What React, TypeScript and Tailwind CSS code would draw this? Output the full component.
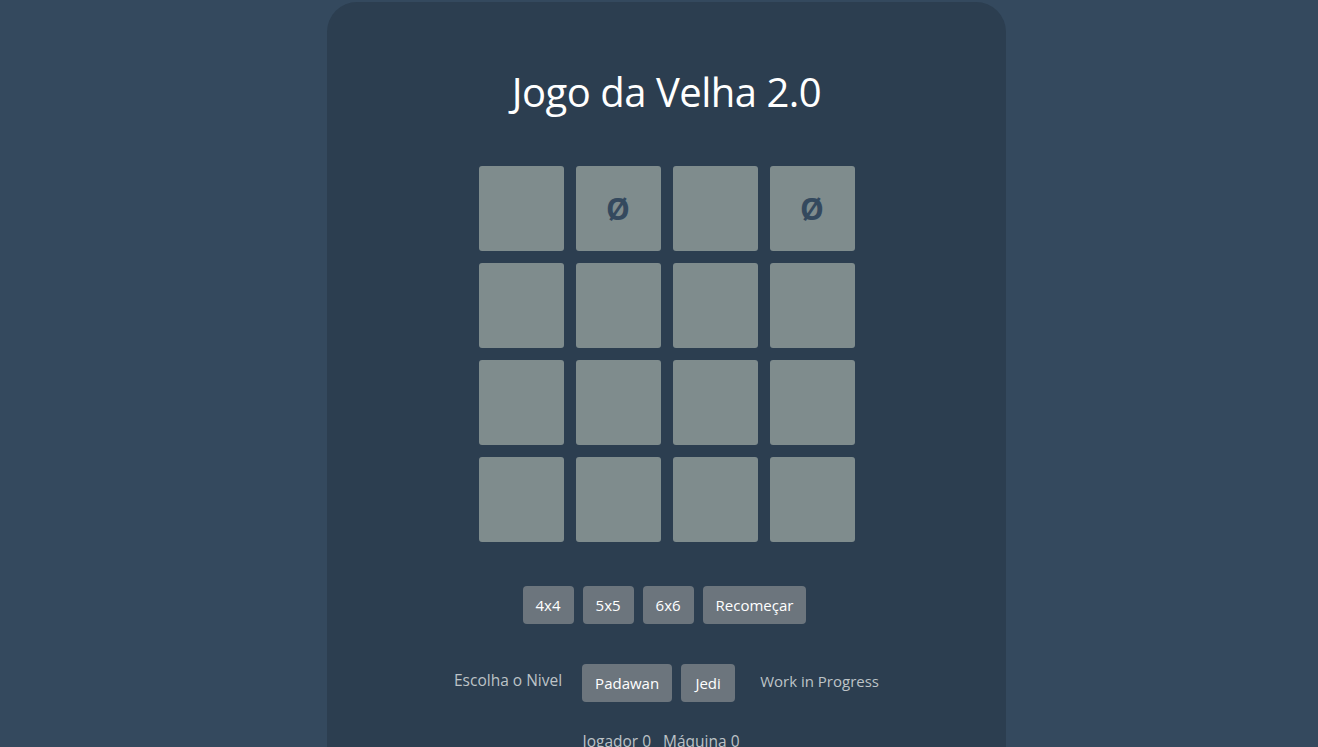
import React from 'react';

const board: string[] = ['', 'ø', '', 'ø', '', '', '', '', '', '', '', '', '', '', '', ''];

export default function App() {
  return (
    <div
      className="min-h-[747px] bg-[#34495e] flex justify-center pl-[15px] pt-[2px]"
      style={{ fontFamily: '"Open Sans", "Noto Sans", sans-serif' }}
    >
      <div className="w-[679px] bg-[#2c3e50] rounded-t-[30px] flex flex-col items-center pt-[66px] pb-6">
        <h1 className="text-[40px] leading-[48px] text-white font-normal tracking-[-0.5px]">Jogo da Velha 2.0</h1>

        {/* tabuleiro */}
        <div className="grid grid-cols-4 gap-[12px] mt-[50px]">
          {board.map((v, i) => (
            <div
              key={i}
              className="w-[85px] h-[85px] bg-[#7f8c8d] rounded-[3px] flex items-center justify-center text-[30px] font-bold text-[#34495e]"
            >
              {v === 'ø' ? 'Ø' : ''}
            </div>
          ))}
        </div>

        {/* tamanhos */}
        <div className="flex gap-[9px] mt-[44px] mr-[4px]">
          {['4x4', '5x5', '6x6', 'Recomeçar'].map((b) => (
            <button key={b} className="h-[38px] px-[13px] bg-[#6c757d] text-white text-[15px] rounded-[4px]">
              {b}
            </button>
          ))}
        </div>

        {/* nivel */}
        <div className="flex items-center mt-[40px] text-[15px] text-[#bdc3c7]">
          <span className="mr-5 -mt-[4px] text-[15.5px]">Escolha o Nivel</span>
          <button className="h-[38px] px-[13px] bg-[#6c757d] text-white rounded-[4px]">Padawan</button>
          <button className="h-[38px] w-[54px] bg-[#6c757d] text-white rounded-[4px] ml-[9px]">Jedi</button>
          <span className="ml-[25px] -mt-[4px]">Work in Progress</span>
        </div>

        {/* placar */}
        <div className="flex gap-[12px] mt-[28px] mr-[11px] text-[15.5px] text-[#bdc3c7]">
          <span>Jogador 0</span>
          <span>Máquina 0</span>
        </div>
      </div>
    </div>
  );
}
